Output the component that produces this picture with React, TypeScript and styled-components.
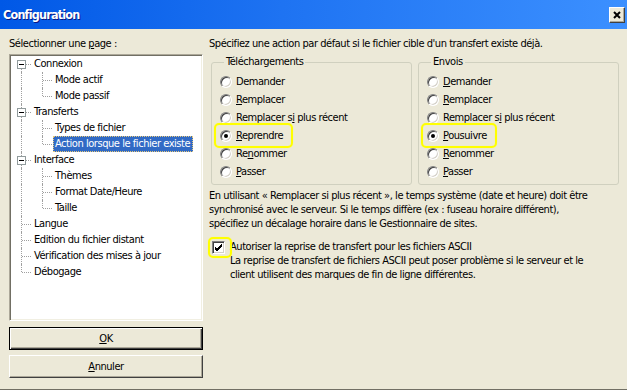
import { FC, ReactNode } from 'react';
import styled, { createGlobalStyle, css } from 'styled-components';

const GlobalStyle = createGlobalStyle`
	html, body {
		margin: 0;
		padding: 0;
		background: #ece9d8;
	}
	body {
		font-family: 'DejaVu Sans', Tahoma, sans-serif;
		font-stretch: condensed;
		font-size: 11px;
		letter-spacing: -0.45px;
		color: #000;
	}
`;

const Window = styled.div`
	width: 627px;
	height: 390px;
	display: flex;
	flex-direction: column;
	background: #ece9d8;
	box-sizing: border-box;
	border-bottom: 1px solid #716f64;
	overflow: hidden;
`;

const TitleBar = styled.div`
	height: 29px;
	flex: none;
	display: flex;
	align-items: center;
	justify-content: space-between;
	padding: 0 2px 0 3px;
	background: linear-gradient(to right, #0058e6 0%, #1e73f2 45%, #3c90ff 100%);
`;

const TitleText = styled.span`
	color: #fff;
	font-weight: 700;
	font-size: 12.5px;
	letter-spacing: -0.8px;
	text-shadow: 1px 1px #0a1883;
`;

const CloseButton = styled.div`
	width: 16px;
	height: 16px;
	box-sizing: border-box;
	display: flex;
	align-items: center;
	justify-content: center;
	background: #ece9d8;
	border: 1px solid;
	border-color: #fff #404040 #404040 #fff;
	box-shadow: inset -1px -1px #aca899;
	margin-top: 1px;
`;

const Content = styled.div`
	flex: 1;
	display: flex;
	padding: 8px 0 0 9px;
`;

const LeftPane = styled.div`
	width: 194px;
	flex: none;
	display: flex;
	flex-direction: column;
`;

const Label = styled.div`
	line-height: 14px;
	white-space: nowrap;
`;

const TreeBox = styled.div`
	margin-top: 3px;
	height: 267px;
	box-sizing: border-box;
	background: #fff;
	border: 1px solid;
	border-color: #aca899 #fff #fff #aca899;
	box-shadow: inset 1px 1px #716f64, inset -1px -1px #f1efe2;
	padding: 1px 1px 0 1px;
`;

const TreeRow = styled.div`
	height: 16px;
	display: flex;
	align-items: center;
	white-space: nowrap;
`;

type CellKind = 'first' | 'tee' | 'end' | 'pass';

const IndentCell = styled.span<{ $kind: CellKind }>`
	position: relative;
	width: 21px;
	height: 16px;
	flex: none;

	&::before {
		content: '';
		position: absolute;
		left: 10px;
		width: 0;
		border-left: 1px dotted #a0a0a0;
		top: ${(p) => (p.$kind === 'first' ? '8px' : '0')};
		bottom: ${(p) => (p.$kind === 'end' ? '8px' : '0')};
	}

	${(p) =>
		p.$kind !== 'pass' &&
		css`
			&::after {
				content: '';
				position: absolute;
				left: 11px;
				top: 8px;
				width: 9px;
				border-top: 1px dotted #a0a0a0;
			}
		`}
`;

const Toggle = styled.span`
	position: absolute;
	left: 6px;
	top: 4px;
	width: 9px;
	height: 9px;
	box-sizing: border-box;
	border: 1px solid #919b9c;
	background: #fff;
	z-index: 1;

	&::after {
		content: '';
		position: absolute;
		left: 1px;
		top: 3px;
		width: 5px;
		height: 1px;
		background: #000;
	}
`;

const NodeLabel = styled.span<{ $selected?: boolean }>`
	line-height: 14px;
	padding: 0 2px 0 1px;
	border: 1px dotted transparent;
	${(p) =>
		p.$selected &&
		css`
			background: #316ac5;
			color: #fff;
			border-color: #e6c87a;
		`}
`;

const Button = styled.div<{ $default?: boolean }>`
	height: 23px;
	box-sizing: border-box;
	display: flex;
	align-items: center;
	justify-content: center;
	background: #ece9d8;
	border: 1px solid;
	border-color: #fff #404040 #404040 #fff;
	box-shadow: inset -1px -1px #aca899;
	${(p) =>
		p.$default &&
		css`
			border: 1px solid #000;
			box-shadow: inset 1px 1px #fff, inset -1px -1px #404040, inset -2px -2px #aca899;
		`}
`;

const ButtonStack = styled.div`
	display: flex;
	flex-direction: column;
	gap: 5px;
	margin-top: 6px;
`;

const RightPane = styled.div`
	flex: 1;
	display: flex;
	flex-direction: column;
	padding-left: 6px;
`;

const Groups = styled.div`
	display: flex;
	gap: 6px;
	margin: 4px 0 0 2px;
`;

const Group = styled.fieldset`
	width: 201px;
	height: 130px;
	box-sizing: border-box;
	margin: 0;
	padding: 4px 0 0 8px;
	border: 1px solid #d0d0bf;
	border-radius: 3px;
	min-inline-size: 0;
	display: flex;
	flex-direction: column;
	align-items: flex-start;
`;

const Legend = styled.legend`
	padding: 0 2px;
	margin-left: 4px;
	line-height: 14px;
`;

const highlightBox = css`
	content: '';
	position: absolute;
	border: 2px solid #ffff00;
	border-radius: 5px;
	box-shadow: 0 0 1px #ffff60, inset 0 0 1px #ffff60;
	pointer-events: none;
`;

const RadioRow = styled.label<{ $highlight?: boolean }>`
	position: relative;
	height: 18px;
	display: inline-flex;
	align-items: center;
	gap: 4px;
	white-space: nowrap;
	line-height: 14px;

	${(p) =>
		p.$highlight &&
		css`
			&::before {
				${highlightBox};
				top: -4px;
				bottom: -3px;
				left: -6px;
				right: -10px;
			}
		`}
`;

const RadioDot = styled.span<{ $checked?: boolean }>`
	position: relative;
	width: 12px;
	height: 12px;
	box-sizing: border-box;
	border-radius: 50%;
	background: #fff;
	border: 1px solid;
	border-color: #808080 #fff #fff #808080;
	box-shadow: inset 1px 1px #404040, inset -1px -1px #d4d0c8;
	flex: none;

	${(p) =>
		p.$checked &&
		css`
			&::after {
				content: '';
				position: absolute;
				left: 3px;
				top: 3px;
				width: 4px;
				height: 4px;
				border-radius: 50%;
				background: #000;
			}
		`}
`;

const Paragraph = styled.p`
	margin: 4px 0 0 0;
	line-height: 14px;
	white-space: nowrap;
`;

const CheckRow = styled.div`
	display: flex;
	align-items: flex-start;
	gap: 5px;
	margin: 9px 0 0 3px;
	line-height: 14px;
`;

const CheckBox = styled.span`
	position: relative;
	width: 13px;
	height: 13px;
	margin-top: 1px;
	box-sizing: border-box;
	flex: none;
	display: flex;
	align-items: center;
	justify-content: center;
	background: #fff;
	border: 1px solid;
	border-color: #808080 #fff #fff #808080;
	box-shadow: inset 1px 1px #404040, inset -1px -1px #d4d0c8;

	&::before {
		${highlightBox};
		top: -5px;
		bottom: -5px;
		left: -5px;
		right: -8px;
	}
`;

const CheckText = styled.div`
	white-space: nowrap;
`;

type Node = { label: string; cells: CellKind[]; toggle?: boolean; selected?: boolean };

const tree: Node[] = [
	{ label: 'Connexion', cells: ['first'], toggle: true },
	{ label: 'Mode actif', cells: ['pass', 'tee'] },
	{ label: 'Mode passif', cells: ['pass', 'end'] },
	{ label: 'Transferts', cells: ['tee'], toggle: true },
	{ label: 'Types de fichier', cells: ['pass', 'tee'] },
	{ label: 'Action lorsque le fichier existe', cells: ['pass', 'end'], selected: true },
	{ label: 'Interface', cells: ['tee'], toggle: true },
	{ label: 'Thèmes', cells: ['pass', 'tee'] },
	{ label: 'Format Date/Heure', cells: ['pass', 'tee'] },
	{ label: 'Taille', cells: ['pass', 'end'] },
	{ label: 'Langue', cells: ['tee'] },
	{ label: 'Edition du fichier distant', cells: ['tee'] },
	{ label: 'Vérification des mises à jour', cells: ['tee'] },
	{ label: 'Débogage', cells: ['end'] }
];

type Option = { text: ReactNode; checked?: boolean; highlight?: boolean };

const downloads: Option[] = [
	{ text: 'Demander' },
	{ text: <><u>R</u>emplacer</> },
	{ text: <>Remplacer s<u>i</u> plus récent</> },
	{ text: <><u>R</u>eprendre</>, checked: true, highlight: true },
	{ text: <>Re<u>n</u>ommer</> },
	{ text: <><u>P</u>asser</> }
];

const uploads: Option[] = [
	{ text: <><u>D</u>emander</> },
	{ text: <><u>R</u>emplacer</> },
	{ text: <>Remplacer s<u>i</u> plus récent</> },
	{ text: <><u>P</u>ousuivre</>, checked: true, highlight: true },
	{ text: <><u>R</u>enommer</> },
	{ text: <><u>P</u>asser</> }
];

const OptionGroup: FC<{ title: string; options: Option[] }> = ({ title, options }) => (
	<Group>
		<Legend>{title}</Legend>
		{options.map((o, i) => (
			<RadioRow key={i} $highlight={o.highlight}>
				<RadioDot $checked={o.checked} />
				<span>{o.text}</span>
			</RadioRow>
		))}
	</Group>
);

const App: FC = () => (
	<>
		<GlobalStyle />
		<Window>
			<TitleBar>
				<TitleText>Configuration</TitleText>
				<CloseButton>
					<svg width="8" height="8" viewBox="0 0 8 8">
						<path d="M1 1L7 7M7 1L1 7" stroke="#000" strokeWidth="2" />
					</svg>
				</CloseButton>
			</TitleBar>
			<Content>
				<LeftPane>
					<Label>
						Sélectionner une <u>p</u>age :
					</Label>
					<TreeBox>
						{tree.map((n) => (
							<TreeRow key={n.label}>
								{n.cells.map((c, i) => (
									<IndentCell key={i} $kind={c}>
										{n.toggle && i === 0 && <Toggle />}
									</IndentCell>
								))}
								<NodeLabel $selected={n.selected}>{n.label}</NodeLabel>
							</TreeRow>
						))}
					</TreeBox>
					<ButtonStack>
						<Button $default>
							<span>
								<u>O</u>K
							</span>
						</Button>
						<Button>
							<span>
								<u>A</u>nnuler
							</span>
						</Button>
					</ButtonStack>
				</LeftPane>
				<RightPane>
					<Label>Spécifiez une action par défaut si le fichier cible d'un transfert existe déjà.</Label>
					<Groups>
						<OptionGroup title="Téléchargements" options={downloads} />
						<OptionGroup title="Envois" options={uploads} />
					</Groups>
					<Paragraph>
						En utilisant « Remplacer si plus récent », le temps système (date et heure) doit être
						<br />
						synchronisé avec le serveur. Si le temps diffère (ex : fuseau horaire différent),
						<br />
						spécifiez un décalage horaire dans le Gestionnaire de sites.
					</Paragraph>
					<CheckRow>
						<CheckBox>
							<svg width="9" height="9" viewBox="0 0 9 9">
								<path d="M1 4l2 2 5-5M1 5l2 2 5-5M1 6l2 2 5-5" stroke="#000" strokeWidth="1" fill="none" />
							</svg>
						</CheckBox>
						<CheckText>
							Autoriser la reprise de transfert pour les fichiers ASCII
							<br />
							La reprise de transfert de fichiers ASCII peut poser problème si le serveur et le
							<br />
							client utilisent des marques de fin de ligne différentes.
						</CheckText>
					</CheckRow>
				</RightPane>
			</Content>
		</Window>
	</>
);

export default App;
